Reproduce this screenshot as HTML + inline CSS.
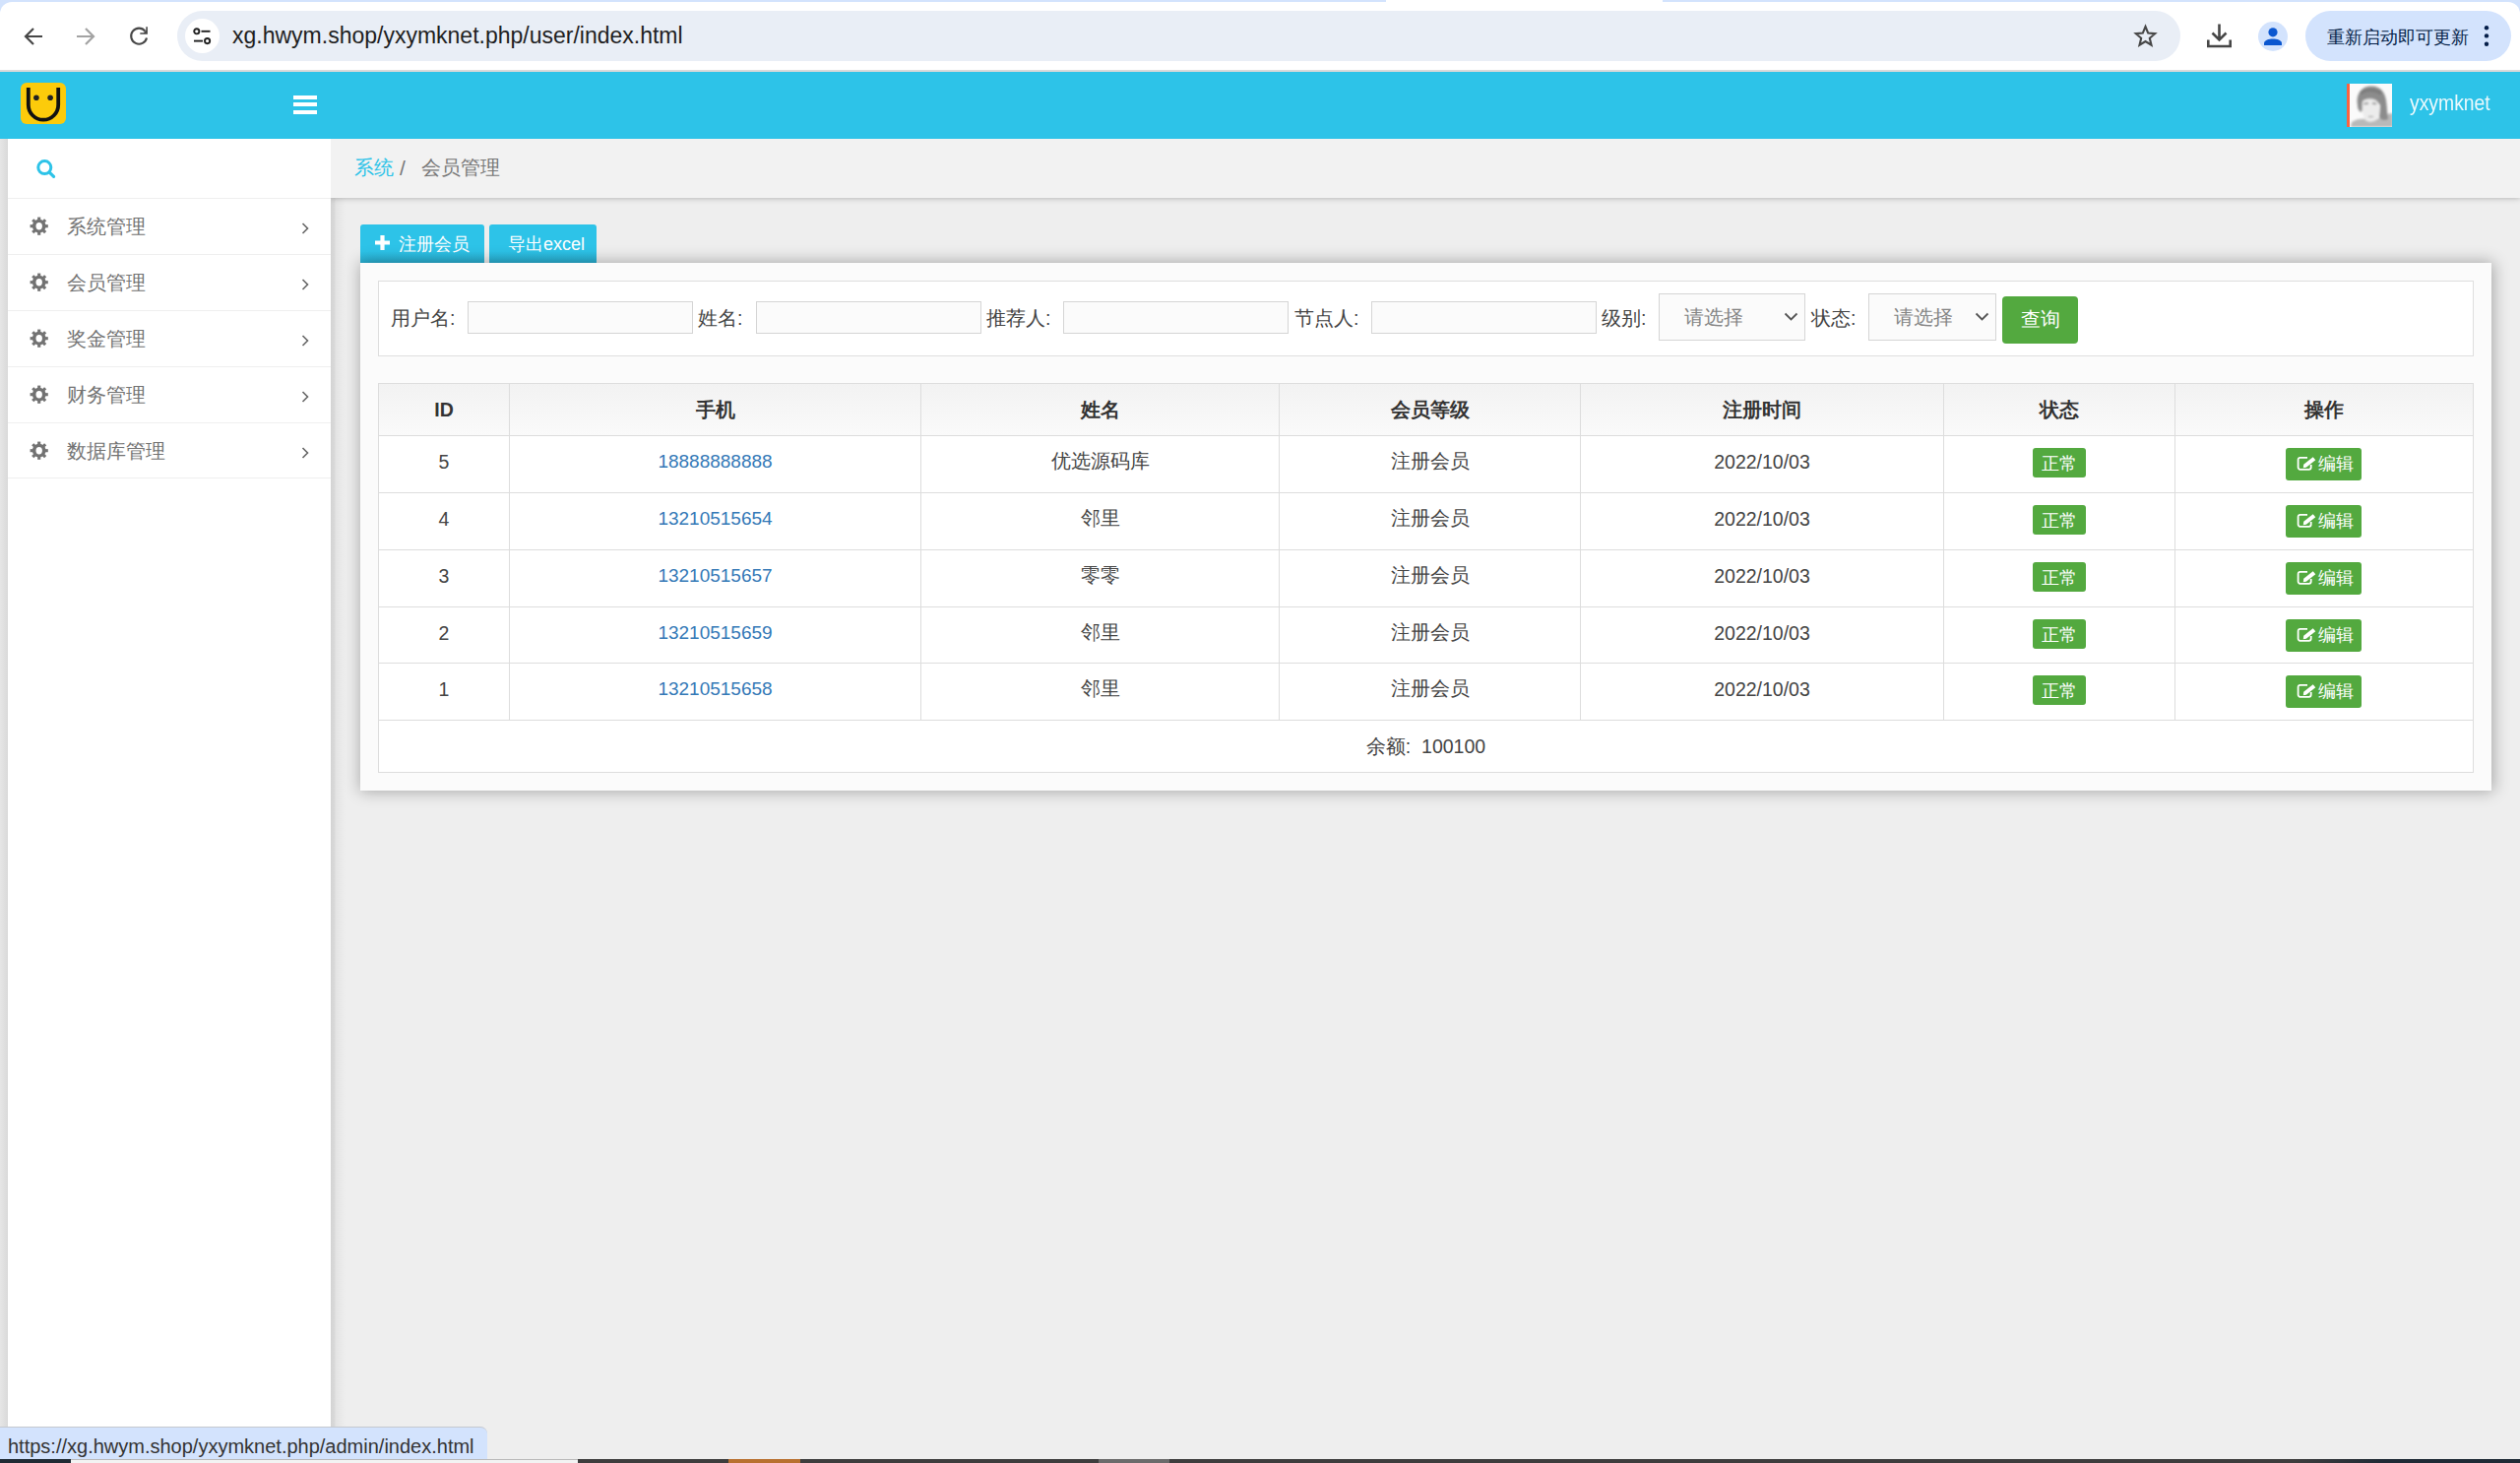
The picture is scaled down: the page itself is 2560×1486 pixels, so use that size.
<!DOCTYPE html>
<html><head><meta charset="utf-8">
<style>
*{margin:0;padding:0;box-sizing:border-box}
html,body{width:2560px;height:1486px;overflow:hidden}
body{position:relative;background:#eeeeee;font-family:"Liberation Sans",sans-serif;color:#444}
.a{position:absolute}
/* chrome */
#topstrip{left:0;top:0;width:2560px;height:16px;background:#d3e3fd}
#tabw{left:1408px;top:0;width:281px;height:3px;background:#fff}
#toolbar{left:0;top:2px;width:2560px;height:69px;background:#fff;border-radius:12px 12px 0 0}
#sep{left:0;top:71px;width:2560px;height:2px;background:#d9d9d9}
#omni{left:180px;top:11px;width:2035px;height:51px;background:#e9eef6;border-radius:26px}
#tune{left:188px;top:19px;width:35px;height:35px;background:#fff;border-radius:50%}
#url{left:236px;top:22px;font-size:23px;line-height:28px;color:#1f1f1f;white-space:nowrap}
#upd{left:2342px;top:11px;width:209px;height:51px;background:#d3e3fd;border-radius:26px}
#updt{left:2364px;top:25px;font-size:17.5px;line-height:26px;color:#041e49;white-space:nowrap}
#prof{left:2294px;top:22px;width:30px;height:30px;background:#d3e3fd;border-radius:50%}
/* navbar */
#nav{z-index:5;left:0;top:73px;width:2560px;height:68px;background:#2dc3e8}
#logo{z-index:6;left:21px;top:84px;width:46px;height:42px;background:#fccb0b;border-radius:6px}
.hb{z-index:6;left:298px;width:24px;height:4px;background:#fff}
#avatar{left:2384px;top:85px;width:46px;height:44px;background:#eee;border-left:3px solid #f9643a;overflow:hidden}
#uname{z-index:6;left:2448px;top:91px;font-size:21.5px;line-height:28px;color:rgba(255,255,255,.9);white-space:nowrap;transform:scaleX(0.9);transform-origin:0 0}
/* sidebar */
#sideL{z-index:2;left:0;top:141px;width:8px;height:1345px;background:linear-gradient(to right,#e6e6e6,#d9d9d9)}
#side{z-index:2;left:8px;top:141px;width:328px;height:1345px;background:#fff}
.mi{z-index:3;left:8px;width:328px;height:57px;border-top:1px solid #efefef}
.mi .t{position:absolute;left:60px;top:14.5px;font-size:19.5px;line-height:26px;color:#737373;white-space:nowrap}
.mi svg.g{position:absolute;left:22.4px;top:18.3px}
.mi svg.c{position:absolute;left:298px;top:23.5px}
/* breadcrumb */
#bc{left:336px;top:141px;width:2224px;height:60px;background:#f2f2f2;box-shadow:0 0 6px rgba(0,0,0,.3)}
#mainshadow{left:336px;top:201px;width:15px;height:1285px;background:linear-gradient(to right,rgba(0,0,0,.115),rgba(0,0,0,.09) 25%,rgba(0,0,0,.045) 35%,rgba(0,0,0,.02) 70%,rgba(0,0,0,0))}
.bct{top:157px;font-size:19.5px;line-height:26px;white-space:nowrap}
/* buttons */
.btn{top:228px;height:39px;background:linear-gradient(to bottom,#2dc3e8 0%,#2dc3e8 70%,#29aed0 100%);border-radius:3px 3px 0 0;color:#fff;font-size:18px;line-height:41px;white-space:nowrap}
#card{left:366px;top:267px;width:2165px;height:536px;background:#fbfbfb;box-shadow:1px 0 15px 1px rgba(0,0,0,.3)}
#form{left:384px;top:285px;width:2129px;height:77px;background:#fff;border:1px solid #dedede}
.lbl{top:310px;font-size:19.5px;line-height:26px;color:#444;white-space:nowrap}
.inp{top:306px;width:229px;height:33px;background:#fbfbfb;border:1px solid #d5d5d5}
.sel{top:298px;height:48px;background:#fbfbfb;border:1px solid #d5d5d5;color:#858585;font-size:19.5px;line-height:46px;white-space:nowrap}
#qbtn{left:2034px;top:301px;width:77px;height:48px;background:#53a93f;border-radius:4px;color:#fff;font-size:19.5px;line-height:46px;text-align:center}
/* table */
.hl{left:384px;width:2129px;height:1px;background:#dddddd}
.vl{top:389px;width:1px;height:342px;background:#dddddd}
#thead{left:384px;top:389px;width:2129px;height:53px;background:linear-gradient(to bottom,#f2f2f2,#fafafa)}
#tbody{left:384px;top:442px;width:2129px;height:343px;background:#fff}
.th{top:403px;font-size:19.5px;line-height:26px;font-weight:bold;color:#333;text-align:center;white-space:nowrap}
.td{font-size:19.5px;line-height:26px;color:#444;text-align:center;white-space:nowrap}
.ph{color:#3479b7;font-size:19px}
.badge{width:54px;height:30px;background:#53a93f;border-radius:3px;color:#fff;font-size:18px;line-height:32px;text-align:center}
.edit{width:77px;height:33px;background:#53a93f;border-radius:3px;color:#fff;font-size:18px;line-height:33px;white-space:nowrap}
/* status bubble */
#status{z-index:10;left:0;top:1449px;width:495px;height:34px;background:#d3e3fd;border-top:1px solid #c4c8cf;border-radius:0 7px 0 0}
#statust{z-index:11;left:8px;top:1457px;font-size:20px;line-height:24px;color:#333;white-space:nowrap}
#task{z-index:10;left:0;top:1482px;width:2560px;height:4px;background:#3d3d3d}
</style></head>
<body>
<!-- browser chrome -->
<div class="a" id="topstrip"></div>
<div class="a" id="tabw"></div>
<div class="a" id="toolbar"></div>
<div class="a" id="sep"></div>
<svg class="a" style="left:24px;top:27px" width="20" height="20" viewBox="0 0 20 20"><path d="M19 10H3M10 2L2 10l8 8" fill="none" stroke="#474747" stroke-width="2.2"/></svg>
<svg class="a" style="left:77px;top:27px" width="20" height="20" viewBox="0 0 20 20"><path d="M1 10h16M10 2l8 8-8 8" fill="none" stroke="#a3a3a3" stroke-width="2.2"/></svg>
<svg class="a" style="left:131px;top:26px" width="21" height="21" viewBox="0 0 21 21"><path d="M18 12.4A8 8 0 1 1 16.4 5.6" fill="none" stroke="#474747" stroke-width="2.1"/><path d="M17.3 1.3H18.9V8.8H11.3V7.2H14.8L17.3 4.7Z" fill="#474747"/></svg>
<div class="a" id="omni"></div>
<div class="a" id="tune"></div>
<svg class="a" style="left:196px;top:28px" width="19" height="18" viewBox="0 0 19 18"><circle cx="3.8" cy="3.8" r="2.6" fill="none" stroke="#1f1f1f" stroke-width="1.9"/><path d="M8.5 3.8h9" stroke="#1f1f1f" stroke-width="1.9"/><circle cx="14.6" cy="13.6" r="2.6" fill="none" stroke="#1f1f1f" stroke-width="1.9"/><path d="M1 13.6h9" stroke="#1f1f1f" stroke-width="1.9"/></svg>
<div class="a" id="url">xg.hwym.shop/yxymknet.php/user/index.html</div>
<svg class="a" style="left:2167px;top:24px" width="25" height="24" viewBox="0 0 25 24"><path d="M12.5 3l2.7 6.6 7 .6-5.4 4.6 1.7 6.9-6-3.7-6 3.7 1.7-6.9-5.4-4.6 7-.6z" fill="none" stroke="#474747" stroke-width="2.1" stroke-linejoin="miter"/></svg>
<svg class="a" style="left:2241px;top:23px" width="27" height="27" viewBox="0 0 27 27"><path d="M13.5 1.5v16M6.5 10.5l7 7 7-7" fill="none" stroke="#474747" stroke-width="2.6"/><path d="M2.3 17.5v6.5h22.4v-6.5" fill="none" stroke="#474747" stroke-width="2.6"/></svg>
<div class="a" id="prof"></div>
<svg class="a" style="left:2299px;top:27px" width="20" height="20" viewBox="0 0 20 20"><circle cx="10" cy="5.8" r="4.6" fill="#0b57d0"/><path d="M1 19v-2.2c0-2.8 5-4.3 9-4.3s9 1.5 9 4.3V19z" fill="#0b57d0"/></svg>
<div class="a" id="upd"></div>
<div class="a" id="updt">重新启动即可更新</div>
<svg class="a" style="left:2522px;top:24px" width="8" height="25" viewBox="0 0 8 25"><circle cx="4" cy="4.3" r="2.2" fill="#041e49"/><circle cx="4" cy="12.4" r="2.2" fill="#041e49"/><circle cx="4" cy="20.8" r="2.2" fill="#041e49"/></svg>

<!-- navbar -->
<div class="a" id="nav"></div>
<div class="a" id="logo"></div>
<svg class="a" style="z-index:6;left:21px;top:84px" width="46" height="42" viewBox="0 0 46 42"><path d="M7.8 4.9v17.6a15.2 15.2 0 0 0 30.4 0V4.9" fill="none" stroke="#111" stroke-width="3.8"/><circle cx="15.9" cy="15.3" r="2.8" fill="#222"/><circle cx="30.1" cy="15.3" r="2.8" fill="#222"/></svg>
<div class="a hb" style="top:97px"></div>
<div class="a hb" style="top:104px"></div>
<div class="a hb" style="top:112px"></div>
<svg class="a" style="z-index:6;left:2384px;top:85px" width="46" height="44" viewBox="0 0 46 44"><defs><filter id="bl" x="-10%" y="-10%" width="120%" height="120%"><feGaussianBlur stdDeviation="0.9"/></filter><clipPath id="ac"><rect x="3" y="0" width="43" height="44"/></clipPath></defs><rect x="0" y="0" width="3" height="44" fill="#fa6340"/><rect x="3" y="0" width="43" height="44" fill="#fbfbfb"/><g clip-path="url(#ac)" filter="url(#bl)"><path d="M4 44 L5 39 C9 36 15 35 19 36 L31 36 C36 33 42 30 47 30 L47 44z" fill="#b9b9b9"/><path d="M11 22 C9 12 14 3 24 2.5 C34 2 39 9 40 17 C41 24 41 30 42 36 C38 38 35 37 33 34 L34 22 C30 16 25 14 20 18 C17 22 16 26 15 29 C12 28 11 25 11 22z" fill="#8c8c8c"/><path d="M16 18 C19 15 26 14 31 18 C34 22 34 31 31 36 C28 39 22 40 19 37 C16 33 15 24 16 18z" fill="#ececec"/><path d="M17.5 20.5 L22 20 M26 20 L30 20.5" stroke="#777" stroke-width="1.3"/><path d="M22 33.5 L27 33.5" stroke="#999" stroke-width="1.1"/><path d="M14 10 C18 6 28 5 35 10" stroke="#7a7a7a" stroke-width="3" fill="none"/></g></svg>
<div class="a" id="uname">yxymknet</div>

<!-- sidebar -->
<div class="a" id="sideL"></div>
<div class="a" id="side"></div>
<svg class="a" style="z-index:3;left:36px;top:161px" width="21" height="21" viewBox="0 0 21 21"><circle cx="9.3" cy="9.1" r="6.5" fill="none" stroke="#2dc3e8" stroke-width="3"/><path d="M14 13.8l4.6 4.5" stroke="#2dc3e8" stroke-width="3.2" stroke-linecap="round"/></svg>

<div class="a mi" style="top:201px"><svg class="g" width="19.4" height="19.4" viewBox="0 0 20 20"><g fill="#737373" transform="translate(10 10)"><circle r="7.1"/><rect x="-1.6" y="-9.4" width="3.2" height="18.8"/><rect x="-1.6" y="-9.4" width="3.2" height="18.8" transform="rotate(45)"/><rect x="-1.6" y="-9.4" width="3.2" height="18.8" transform="rotate(90)"/><rect x="-1.6" y="-9.4" width="3.2" height="18.8" transform="rotate(135)"/></g><ellipse cx="10" cy="10" rx="3.3" ry="3.8" fill="#fff"/></svg><div class="t">系统管理</div><svg class="c" width="9" height="12" viewBox="0 0 9 12"><path d="M1.5 1l5 5-5 5" fill="none" stroke="#666" stroke-width="1.6"/></svg></div>
<div class="a mi" style="top:258px"><svg class="g" width="19.4" height="19.4" viewBox="0 0 20 20"><g fill="#737373" transform="translate(10 10)"><circle r="7.1"/><rect x="-1.6" y="-9.4" width="3.2" height="18.8"/><rect x="-1.6" y="-9.4" width="3.2" height="18.8" transform="rotate(45)"/><rect x="-1.6" y="-9.4" width="3.2" height="18.8" transform="rotate(90)"/><rect x="-1.6" y="-9.4" width="3.2" height="18.8" transform="rotate(135)"/></g><ellipse cx="10" cy="10" rx="3.3" ry="3.8" fill="#fff"/></svg><div class="t">会员管理</div><svg class="c" width="9" height="12" viewBox="0 0 9 12"><path d="M1.5 1l5 5-5 5" fill="none" stroke="#666" stroke-width="1.6"/></svg></div>
<div class="a mi" style="top:315px"><svg class="g" width="19.4" height="19.4" viewBox="0 0 20 20"><g fill="#737373" transform="translate(10 10)"><circle r="7.1"/><rect x="-1.6" y="-9.4" width="3.2" height="18.8"/><rect x="-1.6" y="-9.4" width="3.2" height="18.8" transform="rotate(45)"/><rect x="-1.6" y="-9.4" width="3.2" height="18.8" transform="rotate(90)"/><rect x="-1.6" y="-9.4" width="3.2" height="18.8" transform="rotate(135)"/></g><ellipse cx="10" cy="10" rx="3.3" ry="3.8" fill="#fff"/></svg><div class="t">奖金管理</div><svg class="c" width="9" height="12" viewBox="0 0 9 12"><path d="M1.5 1l5 5-5 5" fill="none" stroke="#666" stroke-width="1.6"/></svg></div>
<div class="a mi" style="top:372px"><svg class="g" width="19.4" height="19.4" viewBox="0 0 20 20"><g fill="#737373" transform="translate(10 10)"><circle r="7.1"/><rect x="-1.6" y="-9.4" width="3.2" height="18.8"/><rect x="-1.6" y="-9.4" width="3.2" height="18.8" transform="rotate(45)"/><rect x="-1.6" y="-9.4" width="3.2" height="18.8" transform="rotate(90)"/><rect x="-1.6" y="-9.4" width="3.2" height="18.8" transform="rotate(135)"/></g><ellipse cx="10" cy="10" rx="3.3" ry="3.8" fill="#fff"/></svg><div class="t">财务管理</div><svg class="c" width="9" height="12" viewBox="0 0 9 12"><path d="M1.5 1l5 5-5 5" fill="none" stroke="#666" stroke-width="1.6"/></svg></div>
<div class="a mi" style="top:429px"><svg class="g" width="19.4" height="19.4" viewBox="0 0 20 20"><g fill="#737373" transform="translate(10 10)"><circle r="7.1"/><rect x="-1.6" y="-9.4" width="3.2" height="18.8"/><rect x="-1.6" y="-9.4" width="3.2" height="18.8" transform="rotate(45)"/><rect x="-1.6" y="-9.4" width="3.2" height="18.8" transform="rotate(90)"/><rect x="-1.6" y="-9.4" width="3.2" height="18.8" transform="rotate(135)"/></g><ellipse cx="10" cy="10" rx="3.3" ry="3.8" fill="#fff"/></svg><div class="t">数据库管理</div><svg class="c" width="9" height="12" viewBox="0 0 9 12"><path d="M1.5 1l5 5-5 5" fill="none" stroke="#666" stroke-width="1.6"/></svg></div>
<div class="a mi" style="top:485px;height:1px"></div>

<!-- breadcrumb -->
<div class="a" id="mainshadow"></div>
<div class="a" id="bc"></div>
<div class="a bct" style="left:360px;color:#2dc3e8">系统</div>
<div class="a bct" style="left:406px;top:158px;font-size:21px;color:#777">/</div>
<div class="a bct" style="left:428px;color:#777">会员管理</div>

<!-- buttons -->
<div class="a btn" style="left:366px;width:126px;padding-left:39px">注册会员</div>
<svg class="a" style="left:380px;top:238px" width="17" height="17" viewBox="0 0 17 17"><path d="M8.5 1v15M1 8.5h15" stroke="#fff" stroke-width="4.2"/></svg>
<div class="a btn" style="left:497px;width:109px;padding-left:19px">导出excel</div>

<div class="a" id="card"></div>
<div class="a" id="form"></div>
<div class="a lbl" style="left:397px">用户名:</div>
<div class="a inp" style="left:475px"></div>
<div class="a lbl" style="left:709px">姓名:</div>
<div class="a inp" style="left:768px"></div>
<div class="a lbl" style="left:1002px">推荐人:</div>
<div class="a inp" style="left:1080px"></div>
<div class="a lbl" style="left:1315px">节点人:</div>
<div class="a inp" style="left:1393px"></div>
<div class="a lbl" style="left:1627px">级别:</div>
<div class="a sel" style="left:1685px;width:149px;padding-left:25px">请选择</div>
<svg class="a" style="left:1812px;top:317px" width="15" height="10" viewBox="0 0 15 10"><path d="M1.5 1.5l6 6 6-6" fill="none" stroke="#555" stroke-width="1.8"/></svg>
<div class="a lbl" style="left:1840px">状态:</div>
<div class="a sel" style="left:1898px;width:130px;padding-left:25px">请选择</div>
<svg class="a" style="left:2006px;top:317px" width="15" height="10" viewBox="0 0 15 10"><path d="M1.5 1.5l6 6 6-6" fill="none" stroke="#555" stroke-width="1.8"/></svg>
<div class="a" id="qbtn">查询</div>

<!-- table -->
<div class="a" id="thead"></div>
<div class="a" id="tbody"></div>
<div class="a hl" style="top:389px"></div>
<div class="a hl" style="top:442px"></div>
<div class="a hl" style="top:500px"></div>
<div class="a hl" style="top:558px"></div>
<div class="a hl" style="top:616px"></div>
<div class="a hl" style="top:673px"></div>
<div class="a hl" style="top:731px"></div>
<div class="a hl" style="top:784px"></div>
<div class="a vl" style="left:384px;height:396px"></div>
<div class="a vl" style="left:517px"></div>
<div class="a vl" style="left:935px"></div>
<div class="a vl" style="left:1299px"></div>
<div class="a vl" style="left:1605px"></div>
<div class="a vl" style="left:1974px"></div>
<div class="a vl" style="left:2209px"></div>
<div class="a vl" style="left:2512px;height:396px"></div>

<div class="a th" style="left:385px;width:132px">ID</div>
<div class="a th" style="left:518px;width:417px">手机</div>
<div class="a th" style="left:936px;width:363px">姓名</div>
<div class="a th" style="left:1300px;width:305px">会员等级</div>
<div class="a th" style="left:1606px;width:368px">注册时间</div>
<div class="a th" style="left:1975px;width:234px">状态</div>
<div class="a th" style="left:2210px;width:302px">操作</div>

<div class="a td" style="left:385px;top:456px;width:132px">5</div><div class="a td ph" style="left:518px;top:456px;width:417px">18888888888</div><div class="a td" style="left:936px;top:455px;width:363px">优选源码库</div><div class="a td" style="left:1300px;top:455px;width:305px">注册会员</div><div class="a td" style="left:1606px;top:456px;width:368px">2022/10/03</div><div class="a badge" style="left:2065px;top:455px">正常</div><div class="a edit" style="left:2322px;top:455px"><svg style="position:absolute;left:11px;top:9px" width="21" height="15" viewBox="0 0 21 15"><path d="M11 0.9H3.6A2 2 0 0 0 1.6 2.9v7.9a2 2 0 0 0 2 2h9.1a2 2 0 0 0 2-2V8" fill="none" stroke="#fff" stroke-width="1.8"/><path d="M6.8 11.2L7.2 7.7 16.7 0.3 19.3 3.3 9.8 10.7z" fill="#fff"/></svg><span style="position:absolute;left:33px;top:0">编辑</span></div>
<div class="a td" style="left:385px;top:514px;width:132px">4</div><div class="a td ph" style="left:518px;top:514px;width:417px">13210515654</div><div class="a td" style="left:936px;top:513px;width:363px">邻里</div><div class="a td" style="left:1300px;top:513px;width:305px">注册会员</div><div class="a td" style="left:1606px;top:514px;width:368px">2022/10/03</div><div class="a badge" style="left:2065px;top:513px">正常</div><div class="a edit" style="left:2322px;top:513px"><svg style="position:absolute;left:11px;top:9px" width="21" height="15" viewBox="0 0 21 15"><path d="M11 0.9H3.6A2 2 0 0 0 1.6 2.9v7.9a2 2 0 0 0 2 2h9.1a2 2 0 0 0 2-2V8" fill="none" stroke="#fff" stroke-width="1.8"/><path d="M6.8 11.2L7.2 7.7 16.7 0.3 19.3 3.3 9.8 10.7z" fill="#fff"/></svg><span style="position:absolute;left:33px;top:0">编辑</span></div>
<div class="a td" style="left:385px;top:572px;width:132px">3</div><div class="a td ph" style="left:518px;top:572px;width:417px">13210515657</div><div class="a td" style="left:936px;top:571px;width:363px">零零</div><div class="a td" style="left:1300px;top:571px;width:305px">注册会员</div><div class="a td" style="left:1606px;top:572px;width:368px">2022/10/03</div><div class="a badge" style="left:2065px;top:571px">正常</div><div class="a edit" style="left:2322px;top:571px"><svg style="position:absolute;left:11px;top:9px" width="21" height="15" viewBox="0 0 21 15"><path d="M11 0.9H3.6A2 2 0 0 0 1.6 2.9v7.9a2 2 0 0 0 2 2h9.1a2 2 0 0 0 2-2V8" fill="none" stroke="#fff" stroke-width="1.8"/><path d="M6.8 11.2L7.2 7.7 16.7 0.3 19.3 3.3 9.8 10.7z" fill="#fff"/></svg><span style="position:absolute;left:33px;top:0">编辑</span></div>
<div class="a td" style="left:385px;top:630px;width:132px">2</div><div class="a td ph" style="left:518px;top:630px;width:417px">13210515659</div><div class="a td" style="left:936px;top:629px;width:363px">邻里</div><div class="a td" style="left:1300px;top:629px;width:305px">注册会员</div><div class="a td" style="left:1606px;top:630px;width:368px">2022/10/03</div><div class="a badge" style="left:2065px;top:629px">正常</div><div class="a edit" style="left:2322px;top:629px"><svg style="position:absolute;left:11px;top:9px" width="21" height="15" viewBox="0 0 21 15"><path d="M11 0.9H3.6A2 2 0 0 0 1.6 2.9v7.9a2 2 0 0 0 2 2h9.1a2 2 0 0 0 2-2V8" fill="none" stroke="#fff" stroke-width="1.8"/><path d="M6.8 11.2L7.2 7.7 16.7 0.3 19.3 3.3 9.8 10.7z" fill="#fff"/></svg><span style="position:absolute;left:33px;top:0">编辑</span></div>
<div class="a td" style="left:385px;top:687px;width:132px">1</div><div class="a td ph" style="left:518px;top:687px;width:417px">13210515658</div><div class="a td" style="left:936px;top:686px;width:363px">邻里</div><div class="a td" style="left:1300px;top:686px;width:305px">注册会员</div><div class="a td" style="left:1606px;top:687px;width:368px">2022/10/03</div><div class="a badge" style="left:2065px;top:686px">正常</div><div class="a edit" style="left:2322px;top:686px"><svg style="position:absolute;left:11px;top:9px" width="21" height="15" viewBox="0 0 21 15"><path d="M11 0.9H3.6A2 2 0 0 0 1.6 2.9v7.9a2 2 0 0 0 2 2h9.1a2 2 0 0 0 2-2V8" fill="none" stroke="#fff" stroke-width="1.8"/><path d="M6.8 11.2L7.2 7.7 16.7 0.3 19.3 3.3 9.8 10.7z" fill="#fff"/></svg><span style="position:absolute;left:33px;top:0">编辑</span></div>


<div class="a td" style="left:384px;top:745px;width:2129px">余额:&nbsp;&nbsp;100100</div>

<!-- status -->
<div class="a" id="status"></div>
<div class="a" id="statust">https://xg.hwym.shop/yxymknet.php/admin/index.html</div>
<div class="a" id="task"></div>
<div class="a" style="z-index:11;left:0;top:1482px;width:72px;height:4px;background:#1f2a33"></div>
<div class="a" style="z-index:11;left:72px;top:1482px;width:515px;height:4px;background:#f3f3f3;border-top:1px solid #b9b9b9"></div>
<div class="a" style="z-index:11;left:740px;top:1482px;width:73px;height:4px;background:#b8702f"></div>
<div class="a" style="z-index:11;left:1116px;top:1482px;width:72px;height:4px;background:#6b6b6b"></div>
<div class="a" style="z-index:11;left:2330px;top:1482px;width:230px;height:4px;background:linear-gradient(to right,#3d3d3d,#1f2a35 40%,#1f2a35)"></div>
</body></html>
